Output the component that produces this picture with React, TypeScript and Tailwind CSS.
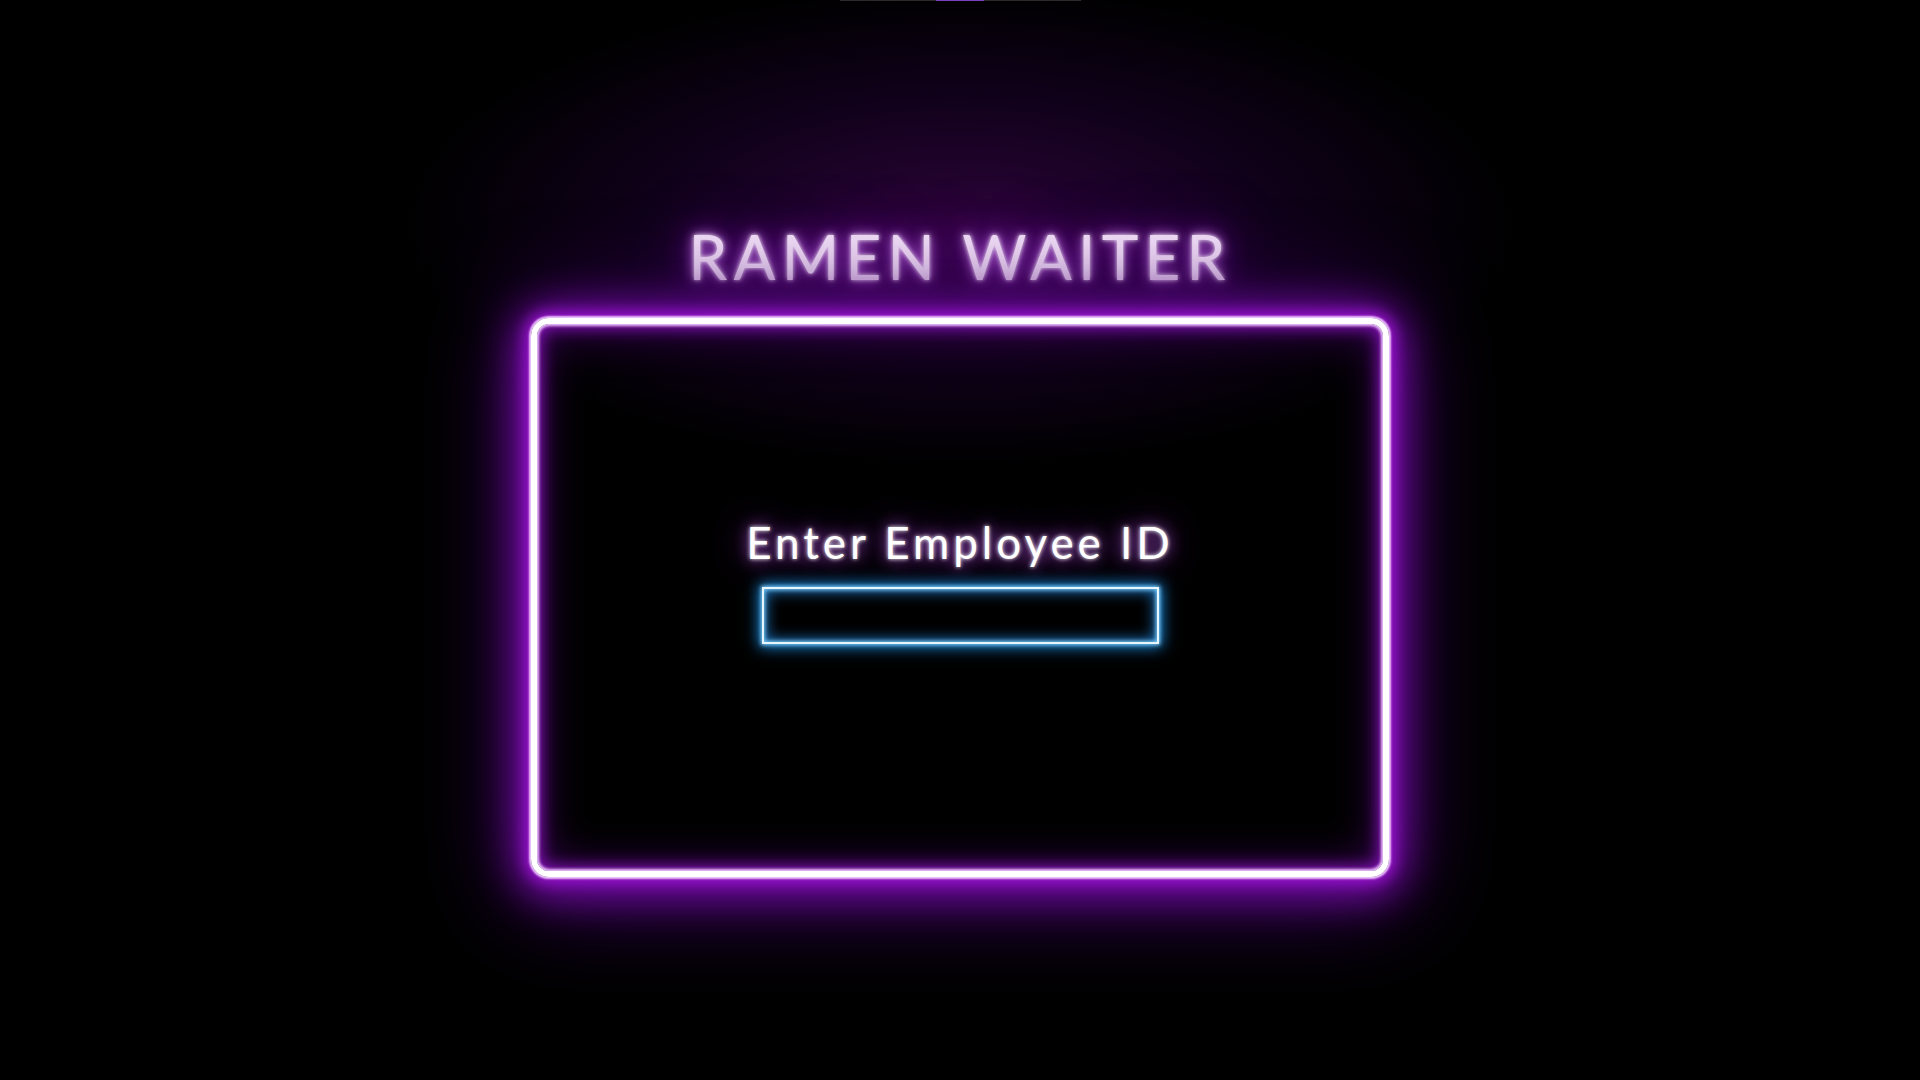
import React, { useState } from 'react';

const App: React.FC = () => {
  const [employeeId, setEmployeeId] = useState('');

  return (
    <div className="min-h-screen w-full bg-black bg-[radial-gradient(ellipse_560px_240px_at_50%_21%,#2c0438_0%,#10011a_55%,#000_100%)] flex flex-col items-center font-['Lato',sans-serif] overflow-hidden">
      {/* top indicator */}
      <div className="flex h-px w-[241px]">
        <div className="w-[96px] bg-[#2b2b2b]" />
        <div className="w-[48px] bg-[#7b3fc4]" />
        <div className="flex-1 bg-[#2b2b2b]" />
      </div>

      <h1 className="mt-[224px] text-[62px] font-normal leading-none tracking-[0.1em] text-[#f5e2fa] [text-shadow:0_0_4px_#ffffff,0_0_12px_#e090ff,0_0_28px_#a020e0,0_0_60px_#7010b0]">
        RAMEN WAITER
      </h1>

      <div className="mt-[31px] w-[858px] h-[559px] rounded-[18px] border-[6px] border-white shadow-[0_0_2px_2px_#f0c8ff,0_0_14px_6px_#9612cc,0_4px_40px_14px_#7a0cae,0_8px_90px_20px_#3c0660,inset_0_0_3px_2px_#f0c8ff,inset_0_0_16px_4px_#8a10c0,inset_0_0_44px_6px_#34054e] flex flex-col items-center pt-[196px]">
        <label
          htmlFor="employee-id"
          className="text-[44px] font-normal leading-none tracking-[0.09em] text-white [text-shadow:0_0_4px_#ffffff,0_0_16px_#c060f0,0_0_40px_#7a1aa8]"
        >
          Enter Employee ID
        </label>
        <input
          id="employee-id"
          type="text"
          value={employeeId}
          onChange={(e) => setEmployeeId(e.target.value)}
          className="mt-[23px] w-[397px] h-[57px] bg-black border-2 border-[#e6f6ff] outline-none px-3 text-white text-2xl shadow-[0_0_4px_1px_#7fd0ff,0_0_14px_3px_#1a8ae0,inset_0_0_4px_1px_#7fd0ff,inset_0_0_14px_3px_#1a6ab0]"
        />
      </div>
    </div>
  );
};

export default App;
